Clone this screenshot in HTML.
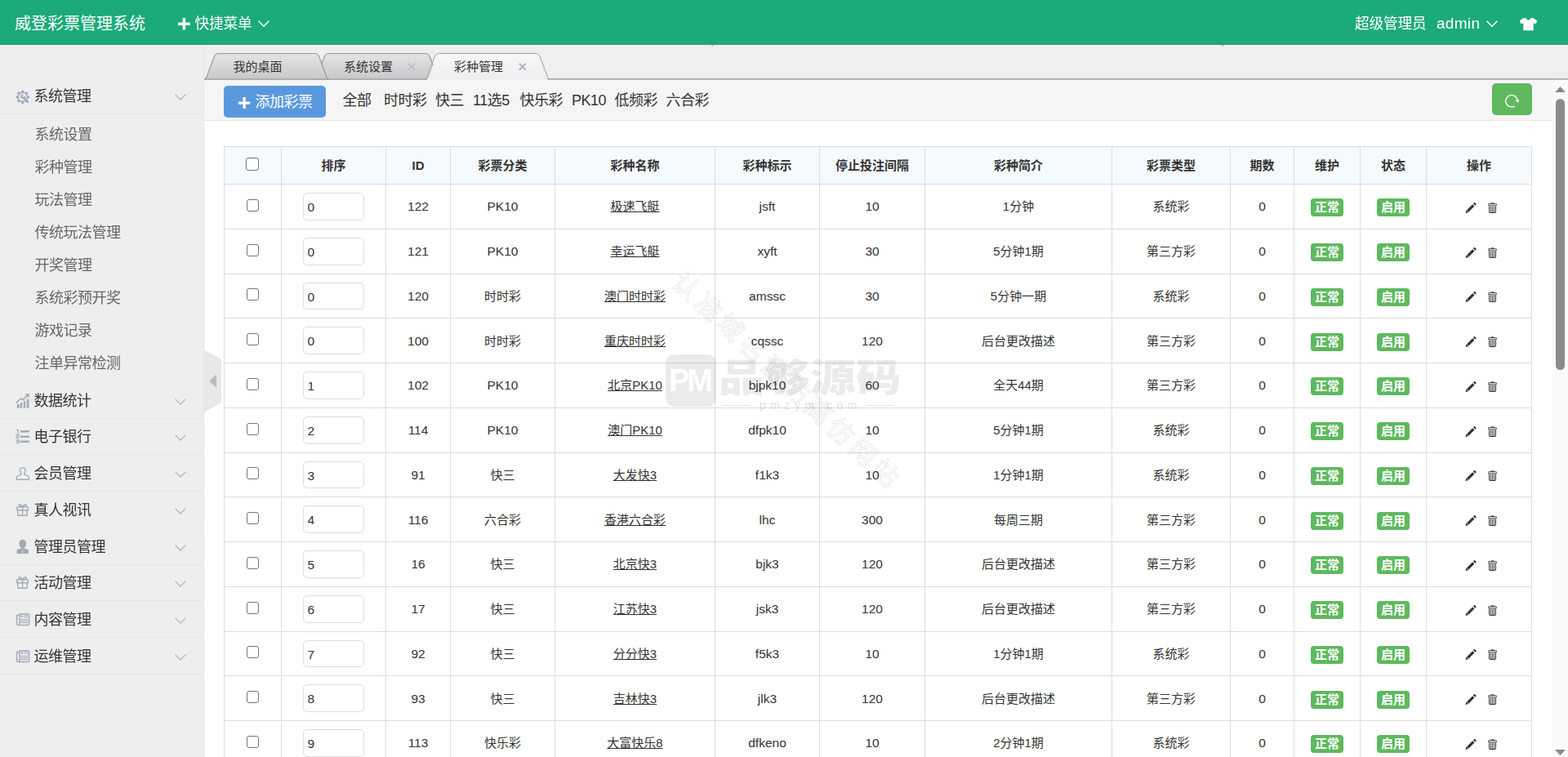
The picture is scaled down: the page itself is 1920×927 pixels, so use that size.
<!DOCTYPE html>
<html lang="zh-CN">
<head>
<meta charset="utf-8">
<title>威登彩票管理系统</title>
<style>
*{box-sizing:border-box}
html,body{margin:0;padding:0}
body{width:1920px;height:927px;overflow:hidden;position:relative;background:#fff;color:#333;
  font-family:"Liberation Sans","Noto Sans CJK SC",sans-serif;font-size:17.5px}
a{color:inherit;text-decoration:none}
svg{display:block}
/* header */
#hd{position:absolute;left:0;top:0;width:1920px;height:55px;background:#1caa7b;color:#fff;border-bottom:1px solid #12a676;z-index:3}
#hl{position:absolute;left:0;top:55px;width:1920px;height:1px;background:rgba(255,248,252,.55);z-index:9}
#hl i{position:absolute;top:0;width:3px;height:2px;background:rgba(120,115,120,.38);border-radius:0 0 2px 2px}
#hd .logo{position:absolute;left:18px;top:2px;line-height:55px;font-size:20px;white-space:nowrap}
#hd .qm{position:absolute;left:0;top:0;height:55px}
#hd .qm .qt{position:absolute;left:238.6px;top:1.700px;line-height:55px;white-space:nowrap;font-size:17.700px;letter-spacing:-.2px}
#hd .ub .role{position:absolute;left:1659px;top:1.500px;line-height:55px;white-space:nowrap;font-size:17.700px;letter-spacing:-.2px}
#hd .ub .adm{position:absolute;left:1759px;top:.5px;line-height:55px;white-space:nowrap;font-size:19px;letter-spacing:.3px}
#hd svg{position:absolute}
/* aside */
#aside{position:absolute;left:0;top:55px;width:250px;height:872px;background:rgba(238,238,238,.98);border-right:1px solid #e5e5e5;will-change:transform;font-size:18px;letter-spacing:-.5px}
#aside .menu{position:relative}
#aside dl{position:absolute;left:0;width:249px}
#aside dl,#aside dd,#aside ul,#aside li{margin:0;padding:0;list-style:none}
#aside dt{position:relative;height:45px;line-height:46px;padding-left:41.5px;border-bottom:1px solid #e5e5e5;color:#333;white-space:nowrap}
#aside dt svg{position:absolute}
#aside dd ul{padding:4px 10px}
#aside dd li{height:40px;line-height:42px}
#aside dd li a{display:block;padding-left:32.5px;color:#666;white-space:nowrap}
#handle{position:absolute;left:250px;top:429px;width:22px;height:76px;z-index:5}
/* tabs */
#tabbar{position:absolute;left:250px;top:55px;width:1670px;height:43px;background:#efeff1;font-size:15px;color:#333}
#tabbar svg{position:absolute;left:0;top:0}
#tabbar .tab{position:absolute;top:11px;height:32px;line-height:32px;white-space:nowrap}
#tabbar .t1{left:35.5px}
#tabbar .t2{left:171px}
#tabbar .t3{left:306px}
/* toolbar */
#toolbar{position:absolute;left:250px;top:98px;width:1651px;height:50px;background:#f5f5f5;border-bottom:1px solid #e5e5e5}
#toolbar .btn-add{position:absolute;left:24px;top:7px;width:125px;height:39px;background:#5a98de;border-radius:5px;color:#fff}
#toolbar .btn-add span{position:absolute;left:38.5px;top:1px;line-height:39px;white-space:nowrap;font-size:18px;letter-spacing:-.5px}
#toolbar .btn-add svg{position:absolute}
#toolbar .links a{position:absolute;top:1px;line-height:49px;white-space:nowrap;color:#333;font-size:18px;letter-spacing:-.5px}
#toolbar .l0{left:169.5px}
#toolbar .l1{left:220px}
#toolbar .l2{left:283px}
#toolbar .l3{left:329px}
#toolbar .l4{left:386.5px}
#toolbar .l5{left:450px}
#toolbar .l6{left:502.5px}
#toolbar .l7{left:565.5px}
#toolbar .btn-ref{position:absolute;left:1577px;top:4px;width:49px;height:39px;background:#5eb95e;border-radius:5px}
#toolbar .btn-ref svg{position:absolute}
/* table */
#main{position:absolute;left:250px;top:148px;width:1651px;height:779px;background:#fff;overflow:hidden}
#tb{position:absolute;left:24px;top:31px;width:1602px;table-layout:fixed;border-collapse:separate;border-spacing:0;
  border-top:1px solid #ddd;border-right:1px solid #ddd;font-size:15px;color:#333}
#tb th,#tb td{border-left:1px solid #ddd;border-bottom:1px solid #ddd;text-align:center;vertical-align:middle;padding:0;white-space:nowrap;line-height:25px}
#tb th{height:46px;background:#f5fafe;font-weight:bold}
#tb td{height:54.75px}
#tb u{text-decoration:underline}
#tb td.n{font-size:15.5px}
.ck{-webkit-appearance:none;appearance:none;display:inline-block;width:15px;height:15px;margin:0 1px 0 0;position:relative;top:-3px;border:1.2px solid #767676;border-radius:3px;background:#fff;vertical-align:middle}
.it{width:75px;height:33.75px;border:1px solid #ddd;border-radius:5px;padding:2.5px 4.5px 0;margin:0;font:inherit;font-size:15.5px;color:#333;background:#fff;outline:none;vertical-align:middle}
.lb{display:inline-block;height:22px;line-height:22px;padding:0 5px;background:#5eb95e;color:#fff;font-weight:bold;border-radius:4px;vertical-align:middle}
.op{padding-left:4px !important}
.op svg{display:inline-block;vertical-align:middle}
#tb th .ck{width:16px;height:16px;top:-3.5px;margin-right:2px}
/* watermark */
#wm{position:absolute;left:0;top:0;width:1920px;height:927px;pointer-events:none;z-index:8;overflow:hidden}
#wm .pm{position:absolute;left:815px;top:434px;width:62px;height:64px;border-radius:11px;background:rgba(0,0,0,.08);color:#fff;
  font-family:"Liberation Sans",sans-serif;font-weight:bold;font-size:38px;line-height:64px;text-align:center;letter-spacing:-3px;text-indent:-3px}
#wm .pg{position:absolute;left:880px;top:433px;height:60px;line-height:60px;font-size:47px;font-weight:900;color:rgba(0,0,0,.078);white-space:nowrap;letter-spacing:0;transform:scaleX(1.19);transform-origin:0 50%}
#wm .wm-url{position:absolute;left:885px;top:486px;width:209px;height:20px;line-height:20px;text-align:center;font-size:14px;color:rgba(0,0,0,.12);letter-spacing:5.5px;white-space:nowrap}
#wm .wm-url span{position:relative;left:3px}
#wm .wm-url i{position:absolute;top:9.5px;width:33px;height:1px;background:rgba(0,0,0,.1)}
#wm .wm-url i.a{left:0}
#wm .wm-url i.b{right:0}
#wm .wm-diag{position:absolute;left:778px;top:447px;width:371px;height:40px;line-height:40px;font-size:32px;letter-spacing:5.1px;white-space:nowrap;text-align:center;
  color:transparent;-webkit-text-stroke:1px rgba(0,0,0,.09);transform:rotate(43.2deg);transform-origin:50% 50%}
/* scrollbar */
#sb{position:absolute;left:1901px;top:98px;width:19px;height:829px;background:#fafafb}

</style>
</head>
<body>
<header id="hd">
  <a class="logo">威登彩票管理系统</a>
  <div class="qm"><svg style="left:218px;top:22px" width="15" height="15" viewBox="0 0 15 15"><path d="M5.7 0h3.4v5.6h5.6v3.4H9.1v5.6H5.7V9H0V5.6h5.7z" fill="#fff"/></svg><span class="qt">快捷菜单</span><svg style="left:316px;top:25px" width="14" height="9" viewBox="0 0 14 9"><path d="M0.6 0.8L7 7.3L13.4 0.8" fill="none" stroke="#fff" stroke-width="1.5"/></svg></div>
  <div class="ub"><span class="role">超级管理员</span><span class="adm">admin</span><svg style="left:1820px;top:25px" width="14" height="9" viewBox="0 0 14 9"><path d="M0.6 0.8L7 7.3L13.4 0.8" fill="none" stroke="#fff" stroke-width="1.5"/></svg><svg style="left:1861px;top:22px" width="21" height="15.500" viewBox="0 0 21 15.500"><path d="M7.300 0C7.900 1.900 9 2.800 10.500 2.800S13.100 1.900 13.700 0L16.600 0.400L21 3.500L19.400 7L16.400 6V15.100H4.700V6L1.700 7L0 3.500L4.400 0.400z" fill="#fff" stroke="#fff" stroke-width="0.600" stroke-linejoin="round"/></svg></div>
</header>
<div id="hl"><i style="left:870.5px"></i><i style="left:1495.5px"></i></div>
<aside id="aside"><div class="menu">
<dl style="top:40px"><dt><svg style="left:17px;top:11px" width="22" height="24" viewBox="0 0 22 24" fill="#a3abb9" stroke="none"><path d="M9.11 6.91L9.21 4.74L12.19 4.74L12.29 6.91L13.81 7.54L15.42 6.07L17.53 8.18L16.06 9.79L16.69 11.31L18.86 11.41L18.86 14.39L16.69 14.49L16.06 16.01L17.53 17.62L15.42 19.73L13.81 18.26L12.29 18.89L12.19 21.06L9.21 21.06L9.11 18.89L7.59 18.26L5.98 19.73L3.87 17.62L5.34 16.01L4.71 14.49L2.54 14.39L2.54 11.41L4.71 11.31L5.34 9.79L3.87 8.18L5.98 6.07L7.59 7.54z M10.700 8.100a4.800 4.800 0 100 9.600 4.800 4.800 0 000-9.600z" fill-rule="evenodd"/><path d="M7.900 12.500a3 3 0 014.200-2.900l-1.900 1.900 1.500 1.500 1.900-1.900a3 3 0 01-3.300 4.200z"/><path d="M10.900 14.300l1.700-1.700 5.200 5.200a1.200 1.200 0 01-1.700 1.700z"/></svg><span class="t">系统管理</span><svg style="left:214px;top:19.800px" width="14" height="8" viewBox="0 0 14 8"><path d="M0.600 0.600L7 7L13.400 0.600" fill="none" stroke="#b4b4b4" stroke-width="1.3"/></svg></dt><dd><ul><li><a>系统设置</a></li><li><a>彩种管理</a></li><li><a>玩法管理</a></li><li><a>传统玩法管理</a></li><li><a>开奖管理</a></li><li><a>系统彩预开奖</a></li><li><a>游戏记录</a></li><li><a>注单异常检测</a></li></ul></dd></dl>
<dl style="top:413px"><dt><svg style="left:17px;top:11px" width="22" height="24" viewBox="0 0 22 24" fill="#a3abb9" stroke="none"><path d="M3.800 16h3v4.800h-3zM7.900 13.900h2.200v6.900H7.900zM11.800 12.100h2.300v8.700h-2.300zM15.700 9.800h2.800v11h-2.800z"/><path d="M3.200 14.200L8.700 8.800 11.100 10.700 16.600 5.400" fill="none" stroke="#a3abb9" stroke-width="1.600" stroke-linecap="round" stroke-linejoin="round"/><path d="M13.400 3.400L19 3L18.400 8.400z"/></svg><span class="t">数据统计</span><svg style="left:214px;top:19.800px" width="14" height="8" viewBox="0 0 14 8"><path d="M0.600 0.600L7 7L13.400 0.600" fill="none" stroke="#b4b4b4" stroke-width="1.3"/></svg></dt></dl>
<dl style="top:457px"><dt><svg style="left:17px;top:11px" width="22" height="24" viewBox="0 0 22 24" fill="#a3abb9" stroke="none"><path d="M7.900 4.100h11.200v2.400H7.900zM7.900 10.600h11.200v2.400H7.900zM7.900 16.600h11.200v2.400H7.900z"/><path d="M2.500 3h3.200v3.900H4.200V4.100H2.500zM2.400 8.200h4.300v3.300H3.800v1.100h2.900v1.200H2.400v-3.400h2.900v-1H2.400zM2.400 15.300h4.300V20H2.400v-1.100h2.900v-.700H3.300v-1.100h2v-.700H2.400z"/></svg><span class="t">电子银行</span><svg style="left:214px;top:19.800px" width="14" height="8" viewBox="0 0 14 8"><path d="M0.600 0.600L7 7L13.400 0.600" fill="none" stroke="#b4b4b4" stroke-width="1.3"/></svg></dt></dl>
<dl style="top:502px"><dt><svg style="left:17px;top:11px" width="22" height="24" viewBox="0 0 22 24" fill="#a3abb9" stroke="none"><path d="M10.800 4.600c2.200 0 3.300 1.600 3.300 3.600 0 1.400-.600 2.400-1.200 3.200-.500.700-.400 1.400.400 1.700 2.400.900 5 1.600 5.100 4.200v1.900H3.200v-1.900c.100-2.600 2.700-3.300 5.100-4.200.800-.300.900-1 .400-1.700-.600-.800-1.200-1.800-1.200-3.200 0-2 1.100-3.600 3.300-3.600z" fill="none" stroke="#a3abb9" stroke-width="1.400" stroke-linejoin="round"/></svg><span class="t">会员管理</span><svg style="left:214px;top:19.800px" width="14" height="8" viewBox="0 0 14 8"><path d="M0.600 0.600L7 7L13.400 0.600" fill="none" stroke="#b4b4b4" stroke-width="1.3"/></svg></dt></dl>
<dl style="top:547px"><dt><svg style="left:17px;top:11px" width="22" height="24" viewBox="0 0 22 24" fill="#a3abb9" stroke="none"><path d="M3.800 7.900h13.500v3.900H3.800zM4.900 11.800h11.300v6.500H4.900zM10.600 7.900v10.400" fill="none" stroke="#a3abb9" stroke-width="1.400" stroke-linejoin="round"/><path d="M10.400 7.500C8.800 4.600 6.400 4 5.900 5.400 5.500 6.700 7.200 7.500 10.400 7.500zM10.800 7.500C12.400 4.600 14.800 4 15.300 5.400 15.700 6.700 14 7.500 10.800 7.500z" fill="none" stroke="#a3abb9" stroke-width="1.300" stroke-linejoin="round"/></svg><span class="t">真人视讯</span><svg style="left:214px;top:19.800px" width="14" height="8" viewBox="0 0 14 8"><path d="M0.600 0.600L7 7L13.400 0.600" fill="none" stroke="#b4b4b4" stroke-width="1.3"/></svg></dt></dl>
<dl style="top:592px"><dt><svg style="left:17px;top:11px" width="22" height="24" viewBox="0 0 22 24" fill="#a3abb9" stroke="none"><path d="M10.700 2.800c2.700 0 4.500 2.100 4.500 4.900 0 2.200-1.200 3.900-2.600 4.700v1l4.200 1.300c.900.300 1.300 1 1.300 1.900V19c0 .600-.500 1-1.100 1H4.600c-.600 0-1.100-.400-1.100-1v-2.400c0-.900.400-1.600 1.300-1.900L9 13.400v-1C7.600 11.600 6.300 9.900 6.300 7.700c0-2.800 1.800-4.900 4.400-4.900z"/><path d="M10.200 15.300h1.100v1h-1.100zM10.100 16.900h1.300l.200 1.900h-1.700z" fill="#dfe2e6"/></svg><span class="t">管理员管理</span><svg style="left:214px;top:19.800px" width="14" height="8" viewBox="0 0 14 8"><path d="M0.600 0.600L7 7L13.400 0.600" fill="none" stroke="#b4b4b4" stroke-width="1.3"/></svg></dt></dl>
<dl style="top:636px"><dt><svg style="left:17px;top:11px" width="22" height="24" viewBox="0 0 22 24" fill="#a3abb9" stroke="none"><path d="M3.800 7.900h13.500v3.900H3.800zM4.900 11.800h11.300v6.500H4.900zM10.600 7.900v10.400" fill="none" stroke="#a3abb9" stroke-width="1.400" stroke-linejoin="round"/><path d="M10.400 7.500C8.800 4.600 6.400 4 5.900 5.400 5.500 6.700 7.200 7.500 10.400 7.500zM10.800 7.500C12.400 4.600 14.800 4 15.300 5.400 15.700 6.700 14 7.500 10.800 7.500z" fill="none" stroke="#a3abb9" stroke-width="1.300" stroke-linejoin="round"/></svg><span class="t">活动管理</span><svg style="left:214px;top:19.800px" width="14" height="8" viewBox="0 0 14 8"><path d="M0.600 0.600L7 7L13.400 0.600" fill="none" stroke="#b4b4b4" stroke-width="1.3"/></svg></dt></dl>
<dl style="top:681px"><dt><svg style="left:17px;top:11px" width="22" height="24" viewBox="0 0 22 24" fill="#a3abb9" stroke="none"><path d="M7 4.700h10.300q1.200 0 1.200 1.200V17q0 1.400-1.400 1.400H5q-1.400 0-1.400-1.400V6.600H7z M7 6.600V17q0 1.400-1.700 1.400" fill="none" stroke="#a3abb9" stroke-width="1.500" stroke-linejoin="round"/><path d="M9 6.200h2.100V9H9zM12.600 6h4.300v.900h-4.300zM12.600 8.100h4.300V9h-4.300zM8.200 11.100h8.700v1h-8.700zM8.200 13h8.700v1h-8.700zM8.200 14.900h8.700v1h-8.700z"/></svg><span class="t">内容管理</span><svg style="left:214px;top:19.800px" width="14" height="8" viewBox="0 0 14 8"><path d="M0.600 0.600L7 7L13.400 0.600" fill="none" stroke="#b4b4b4" stroke-width="1.3"/></svg></dt></dl>
<dl style="top:726px"><dt><svg style="left:17px;top:11px" width="22" height="24" viewBox="0 0 22 24" fill="#a3abb9" stroke="none"><path d="M7 4.700h10.300q1.200 0 1.200 1.200V17q0 1.400-1.400 1.400H5q-1.400 0-1.400-1.400V6.600H7z M7 6.600V17q0 1.400-1.700 1.400" fill="none" stroke="#a3abb9" stroke-width="1.500" stroke-linejoin="round"/><path d="M9 6.200h2.100V9H9zM12.600 6h4.300v.900h-4.300zM12.600 8.100h4.300V9h-4.300zM8.200 11.100h8.700v1h-8.700zM8.200 13h8.700v1h-8.700zM8.200 14.900h8.700v1h-8.700z"/></svg><span class="t">运维管理</span><svg style="left:214px;top:19.800px" width="14" height="8" viewBox="0 0 14 8"><path d="M0.600 0.600L7 7L13.400 0.600" fill="none" stroke="#b4b4b4" stroke-width="1.3"/></svg></dt></dl>
</div></aside>
<div id="handle"><svg width="22" height="76" viewBox="0 0 22 76"><path d="M0 0L21 10.700V64L0 76z" fill="#e8e8e8"/><path d="M15 29.600V46L6 37.800z" fill="#bdbdbd"/></svg></div>
<div id="tabbar">
<svg width="1670" height="43" viewBox="0 0 1670 43"><defs><linearGradient id="g1" x1="0" y1="0" x2="0" y2="1"><stop offset="0" stop-color="#e4e4e4"/><stop offset="1" stop-color="#c8c8ca"/></linearGradient><linearGradient id="g2" x1="0" y1="0" x2="0" y2="1"><stop offset="0" stop-color="#f7f7f7"/><stop offset="1" stop-color="#eeeef0"/></linearGradient></defs><rect x="0" y="41" width="1670" height="1" fill="#a6a6a6"/><rect x="0" y="42" width="1670" height="1" fill="#c4c4c4"/><path d="M135 42C136.5 42 137.5 41 138.5 38L147 15Q148.7 10.500 152.5 10.500H271.0Q274.8 10.500 276.5 15L285.0 38C286.0 41 287.0 42 288.5 42z" fill="url(#g1)" stroke="#9a9a9a" stroke-width="1.200"/><path d="M0 42C1.5 42 2.5 41 3.5 38L12 15Q13.7 10.500 17.5 10.500H135.5Q139.3 10.500 141 15L149.5 38C150.5 41 151.5 42 153 42z" fill="url(#g1)" stroke="#9a9a9a" stroke-width="1.200"/><path d="M272 42C273.5 42 274.5 41 275.5 38L284 15Q285.7 10.500 289.5 10.500H404.0Q407.8 10.500 409.5 15L418.0 38C419.0 41 420.0 42 421.5 42zV43H272z" fill="url(#g2)"/><path d="M270 42C271.5 42 272.5 41 273.5 38L282 15Q283.7 10.500 287.5 10.500H406.0Q409.8 10.500 411.5 15L420.0 38C421.0 41 422.0 42 423.5 42" fill="none" stroke="#a3a3a3"/><rect x="273" y="42" width="148" height="1" fill="#f2f2f3"/></svg>
  <span class="tab t1">我的桌面</span>
  <span class="tab t2">系统设置</span><svg style="left:249.3px;top:22.300px" width="9.500" height="9.500" viewBox="0 0 9 9"><path d="M0.800 0.800L8.200 8.200M8.200 0.800L0.800 8.200" stroke="#b1b8c1" stroke-width="1.4" fill="none"/></svg>
  <span class="tab t3">彩种管理</span><svg style="left:384.5px;top:22.300px" width="9.500" height="9.500" viewBox="0 0 9 9"><path d="M0.800 0.800L8.200 8.200M8.200 0.800L0.800 8.200" stroke="#a4abb6" stroke-width="1.6" fill="none"/></svg>
</div>
<nav id="toolbar">
  <a class="btn-add"><svg style="left:18px;top:13.600px" width="14.500" height="14.500" viewBox="0 0 15 15"><path d="M5.700 0h3.400v5.600h5.600v3.400H9.100v5.600H5.700V9H0V5.600h5.700z" fill="#fff"/></svg><span>添加彩票</span></a>
  <span class="links"><a class="l0">全部</a><a class="l1">时时彩</a><a class="l2">快三</a><a class="l3">11选5</a><a class="l4">快乐彩</a><a class="l5">PK10</a><a class="l6">低频彩</a><a class="l7">六合彩</a></span>
  <a class="btn-ref"><svg style="left:16px;top:13px" width="18" height="18" viewBox="0 0 18 18"><path d="M15.100 8.200A7.200 7.200 0 1 0 11.700 14.800" fill="none" stroke="#fff" stroke-width="1.400"/><path d="M12.400 7.700L17.300 6.700L15.700 10.900z" fill="#fff"/></svg></a>
</nav>
<main id="main">
<table id="tb">
<colgroup><col style="width:70px"><col style="width:128px"><col style="width:79px"><col style="width:128px"><col style="width:196px"><col style="width:128px"><col style="width:129px"><col style="width:229px"><col style="width:145px"><col style="width:78px"><col style="width:81px"><col style="width:81px"><col style="width:129px"></colgroup>
<thead><tr><th><input type="checkbox" class="ck"></th><th>排序</th><th>ID</th><th>彩票分类</th><th>彩种名称</th><th>彩种标示</th><th>停止投注间隔</th><th>彩种简介</th><th>彩票类型</th><th>期数</th><th>维护</th><th>状态</th><th>操作</th></tr></thead>
<tbody>
<tr><td><input type="checkbox" class="ck"></td><td><input type="text" class="it" value="0"></td><td class="n">122</td><td class="n">PK10</td><td><u>极速飞艇</u></td><td class="n">jsft</td><td class="n">10</td><td>1分钟</td><td>系统彩</td><td class="n">0</td><td><span class="lb">正常</span></td><td><span class="lb">启用</span></td><td class="op"><svg width="15" height="15" viewBox="0 0 15 15" style="margin-right:13px"><path d="M0.600 14L1.500 10.300L4.300 13.100z" fill="#333"/><path d="M3.300 11.300L10.300 4.300M11.100 3.500L12.700 1.900" fill="none" stroke="#333" stroke-width="3.300"/></svg><svg width="11" height="13" viewBox="0 0 11 13"><path d="M3.300 1.500Q3.300 0.200 5.500 0.200T7.700 1.500z" fill="#333"/><rect x="0.500" y="1.700" width="10" height="2.200" rx="0.700" fill="#fff" stroke="#333" stroke-width="1"/><path d="M1.600 4.400V11.300Q1.600 12.400 2.700 12.400H8.300Q9.400 12.400 9.400 11.300V4.400" fill="none" stroke="#333" stroke-width="1.100"/><path d="M3.600 5V11.600M5.500 5V11.600M7.400 5V11.600" fill="none" stroke="#333" stroke-width="0.900"/></svg></td></tr>
<tr><td><input type="checkbox" class="ck"></td><td><input type="text" class="it" value="0"></td><td class="n">121</td><td class="n">PK10</td><td><u>幸运飞艇</u></td><td class="n">xyft</td><td class="n">30</td><td>5分钟1期</td><td>第三方彩</td><td class="n">0</td><td><span class="lb">正常</span></td><td><span class="lb">启用</span></td><td class="op"><svg width="15" height="15" viewBox="0 0 15 15" style="margin-right:13px"><path d="M0.600 14L1.500 10.300L4.300 13.100z" fill="#333"/><path d="M3.300 11.300L10.300 4.300M11.100 3.500L12.700 1.900" fill="none" stroke="#333" stroke-width="3.300"/></svg><svg width="11" height="13" viewBox="0 0 11 13"><path d="M3.300 1.500Q3.300 0.200 5.500 0.200T7.700 1.500z" fill="#333"/><rect x="0.500" y="1.700" width="10" height="2.200" rx="0.700" fill="#fff" stroke="#333" stroke-width="1"/><path d="M1.600 4.400V11.300Q1.600 12.400 2.700 12.400H8.300Q9.400 12.400 9.400 11.300V4.400" fill="none" stroke="#333" stroke-width="1.100"/><path d="M3.600 5V11.600M5.500 5V11.600M7.400 5V11.600" fill="none" stroke="#333" stroke-width="0.900"/></svg></td></tr>
<tr><td><input type="checkbox" class="ck"></td><td><input type="text" class="it" value="0"></td><td class="n">120</td><td>时时彩</td><td><u>澳门时时彩</u></td><td class="n">amssc</td><td class="n">30</td><td>5分钟一期</td><td>系统彩</td><td class="n">0</td><td><span class="lb">正常</span></td><td><span class="lb">启用</span></td><td class="op"><svg width="15" height="15" viewBox="0 0 15 15" style="margin-right:13px"><path d="M0.600 14L1.500 10.300L4.300 13.100z" fill="#333"/><path d="M3.300 11.300L10.300 4.300M11.100 3.500L12.700 1.900" fill="none" stroke="#333" stroke-width="3.300"/></svg><svg width="11" height="13" viewBox="0 0 11 13"><path d="M3.300 1.500Q3.300 0.200 5.500 0.200T7.700 1.500z" fill="#333"/><rect x="0.500" y="1.700" width="10" height="2.200" rx="0.700" fill="#fff" stroke="#333" stroke-width="1"/><path d="M1.600 4.400V11.300Q1.600 12.400 2.700 12.400H8.300Q9.400 12.400 9.400 11.300V4.400" fill="none" stroke="#333" stroke-width="1.100"/><path d="M3.600 5V11.600M5.500 5V11.600M7.400 5V11.600" fill="none" stroke="#333" stroke-width="0.900"/></svg></td></tr>
<tr><td><input type="checkbox" class="ck"></td><td><input type="text" class="it" value="0"></td><td class="n">100</td><td>时时彩</td><td><u>重庆时时彩</u></td><td class="n">cqssc</td><td class="n">120</td><td>后台更改描述</td><td>第三方彩</td><td class="n">0</td><td><span class="lb">正常</span></td><td><span class="lb">启用</span></td><td class="op"><svg width="15" height="15" viewBox="0 0 15 15" style="margin-right:13px"><path d="M0.600 14L1.500 10.300L4.300 13.100z" fill="#333"/><path d="M3.300 11.300L10.300 4.300M11.100 3.500L12.700 1.900" fill="none" stroke="#333" stroke-width="3.300"/></svg><svg width="11" height="13" viewBox="0 0 11 13"><path d="M3.300 1.500Q3.300 0.200 5.500 0.200T7.700 1.500z" fill="#333"/><rect x="0.500" y="1.700" width="10" height="2.200" rx="0.700" fill="#fff" stroke="#333" stroke-width="1"/><path d="M1.600 4.400V11.300Q1.600 12.400 2.700 12.400H8.300Q9.400 12.400 9.400 11.300V4.400" fill="none" stroke="#333" stroke-width="1.100"/><path d="M3.600 5V11.600M5.500 5V11.600M7.400 5V11.600" fill="none" stroke="#333" stroke-width="0.900"/></svg></td></tr>
<tr><td><input type="checkbox" class="ck"></td><td><input type="text" class="it" value="1"></td><td class="n">102</td><td class="n">PK10</td><td><u>北京PK10</u></td><td class="n">bjpk10</td><td class="n">60</td><td>全天44期</td><td>第三方彩</td><td class="n">0</td><td><span class="lb">正常</span></td><td><span class="lb">启用</span></td><td class="op"><svg width="15" height="15" viewBox="0 0 15 15" style="margin-right:13px"><path d="M0.600 14L1.500 10.300L4.300 13.100z" fill="#333"/><path d="M3.300 11.300L10.300 4.300M11.100 3.500L12.700 1.900" fill="none" stroke="#333" stroke-width="3.300"/></svg><svg width="11" height="13" viewBox="0 0 11 13"><path d="M3.300 1.500Q3.300 0.200 5.500 0.200T7.700 1.500z" fill="#333"/><rect x="0.500" y="1.700" width="10" height="2.200" rx="0.700" fill="#fff" stroke="#333" stroke-width="1"/><path d="M1.600 4.400V11.300Q1.600 12.400 2.700 12.400H8.300Q9.400 12.400 9.400 11.300V4.400" fill="none" stroke="#333" stroke-width="1.100"/><path d="M3.600 5V11.600M5.500 5V11.600M7.400 5V11.600" fill="none" stroke="#333" stroke-width="0.900"/></svg></td></tr>
<tr><td><input type="checkbox" class="ck"></td><td><input type="text" class="it" value="2"></td><td class="n">114</td><td class="n">PK10</td><td><u>澳门PK10</u></td><td class="n">dfpk10</td><td class="n">10</td><td>5分钟1期</td><td>系统彩</td><td class="n">0</td><td><span class="lb">正常</span></td><td><span class="lb">启用</span></td><td class="op"><svg width="15" height="15" viewBox="0 0 15 15" style="margin-right:13px"><path d="M0.600 14L1.500 10.300L4.300 13.100z" fill="#333"/><path d="M3.300 11.300L10.300 4.300M11.100 3.500L12.700 1.900" fill="none" stroke="#333" stroke-width="3.300"/></svg><svg width="11" height="13" viewBox="0 0 11 13"><path d="M3.300 1.500Q3.300 0.200 5.500 0.200T7.700 1.500z" fill="#333"/><rect x="0.500" y="1.700" width="10" height="2.200" rx="0.700" fill="#fff" stroke="#333" stroke-width="1"/><path d="M1.600 4.400V11.300Q1.600 12.400 2.700 12.400H8.300Q9.400 12.400 9.400 11.300V4.400" fill="none" stroke="#333" stroke-width="1.100"/><path d="M3.600 5V11.600M5.500 5V11.600M7.400 5V11.600" fill="none" stroke="#333" stroke-width="0.900"/></svg></td></tr>
<tr><td><input type="checkbox" class="ck"></td><td><input type="text" class="it" value="3"></td><td class="n">91</td><td>快三</td><td><u>大发快3</u></td><td class="n">f1k3</td><td class="n">10</td><td>1分钟1期</td><td>系统彩</td><td class="n">0</td><td><span class="lb">正常</span></td><td><span class="lb">启用</span></td><td class="op"><svg width="15" height="15" viewBox="0 0 15 15" style="margin-right:13px"><path d="M0.600 14L1.500 10.300L4.300 13.100z" fill="#333"/><path d="M3.300 11.300L10.300 4.300M11.100 3.500L12.700 1.900" fill="none" stroke="#333" stroke-width="3.300"/></svg><svg width="11" height="13" viewBox="0 0 11 13"><path d="M3.300 1.500Q3.300 0.200 5.500 0.200T7.700 1.500z" fill="#333"/><rect x="0.500" y="1.700" width="10" height="2.200" rx="0.700" fill="#fff" stroke="#333" stroke-width="1"/><path d="M1.600 4.400V11.300Q1.600 12.400 2.700 12.400H8.300Q9.400 12.400 9.400 11.300V4.400" fill="none" stroke="#333" stroke-width="1.100"/><path d="M3.600 5V11.600M5.500 5V11.600M7.400 5V11.600" fill="none" stroke="#333" stroke-width="0.900"/></svg></td></tr>
<tr><td><input type="checkbox" class="ck"></td><td><input type="text" class="it" value="4"></td><td class="n">116</td><td>六合彩</td><td><u>香港六合彩</u></td><td class="n">lhc</td><td class="n">300</td><td>每周三期</td><td>第三方彩</td><td class="n">0</td><td><span class="lb">正常</span></td><td><span class="lb">启用</span></td><td class="op"><svg width="15" height="15" viewBox="0 0 15 15" style="margin-right:13px"><path d="M0.600 14L1.500 10.300L4.300 13.100z" fill="#333"/><path d="M3.300 11.300L10.300 4.300M11.100 3.500L12.700 1.900" fill="none" stroke="#333" stroke-width="3.300"/></svg><svg width="11" height="13" viewBox="0 0 11 13"><path d="M3.300 1.500Q3.300 0.200 5.500 0.200T7.700 1.500z" fill="#333"/><rect x="0.500" y="1.700" width="10" height="2.200" rx="0.700" fill="#fff" stroke="#333" stroke-width="1"/><path d="M1.600 4.400V11.300Q1.600 12.400 2.700 12.400H8.300Q9.400 12.400 9.400 11.300V4.400" fill="none" stroke="#333" stroke-width="1.100"/><path d="M3.600 5V11.600M5.500 5V11.600M7.400 5V11.600" fill="none" stroke="#333" stroke-width="0.900"/></svg></td></tr>
<tr><td><input type="checkbox" class="ck"></td><td><input type="text" class="it" value="5"></td><td class="n">16</td><td>快三</td><td><u>北京快3</u></td><td class="n">bjk3</td><td class="n">120</td><td>后台更改描述</td><td>第三方彩</td><td class="n">0</td><td><span class="lb">正常</span></td><td><span class="lb">启用</span></td><td class="op"><svg width="15" height="15" viewBox="0 0 15 15" style="margin-right:13px"><path d="M0.600 14L1.500 10.300L4.300 13.100z" fill="#333"/><path d="M3.300 11.300L10.300 4.300M11.100 3.500L12.700 1.900" fill="none" stroke="#333" stroke-width="3.300"/></svg><svg width="11" height="13" viewBox="0 0 11 13"><path d="M3.300 1.500Q3.300 0.200 5.500 0.200T7.700 1.500z" fill="#333"/><rect x="0.500" y="1.700" width="10" height="2.200" rx="0.700" fill="#fff" stroke="#333" stroke-width="1"/><path d="M1.600 4.400V11.300Q1.600 12.400 2.700 12.400H8.300Q9.400 12.400 9.400 11.300V4.400" fill="none" stroke="#333" stroke-width="1.100"/><path d="M3.600 5V11.600M5.500 5V11.600M7.400 5V11.600" fill="none" stroke="#333" stroke-width="0.900"/></svg></td></tr>
<tr><td><input type="checkbox" class="ck"></td><td><input type="text" class="it" value="6"></td><td class="n">17</td><td>快三</td><td><u>江苏快3</u></td><td class="n">jsk3</td><td class="n">120</td><td>后台更改描述</td><td>第三方彩</td><td class="n">0</td><td><span class="lb">正常</span></td><td><span class="lb">启用</span></td><td class="op"><svg width="15" height="15" viewBox="0 0 15 15" style="margin-right:13px"><path d="M0.600 14L1.500 10.300L4.300 13.100z" fill="#333"/><path d="M3.300 11.300L10.300 4.300M11.100 3.500L12.700 1.900" fill="none" stroke="#333" stroke-width="3.300"/></svg><svg width="11" height="13" viewBox="0 0 11 13"><path d="M3.300 1.500Q3.300 0.200 5.500 0.200T7.700 1.500z" fill="#333"/><rect x="0.500" y="1.700" width="10" height="2.200" rx="0.700" fill="#fff" stroke="#333" stroke-width="1"/><path d="M1.600 4.400V11.300Q1.600 12.400 2.700 12.400H8.300Q9.400 12.400 9.400 11.300V4.400" fill="none" stroke="#333" stroke-width="1.100"/><path d="M3.600 5V11.600M5.500 5V11.600M7.400 5V11.600" fill="none" stroke="#333" stroke-width="0.900"/></svg></td></tr>
<tr><td><input type="checkbox" class="ck"></td><td><input type="text" class="it" value="7"></td><td class="n">92</td><td>快三</td><td><u>分分快3</u></td><td class="n">f5k3</td><td class="n">10</td><td>1分钟1期</td><td>系统彩</td><td class="n">0</td><td><span class="lb">正常</span></td><td><span class="lb">启用</span></td><td class="op"><svg width="15" height="15" viewBox="0 0 15 15" style="margin-right:13px"><path d="M0.600 14L1.500 10.300L4.300 13.100z" fill="#333"/><path d="M3.300 11.300L10.300 4.300M11.100 3.500L12.700 1.900" fill="none" stroke="#333" stroke-width="3.300"/></svg><svg width="11" height="13" viewBox="0 0 11 13"><path d="M3.300 1.500Q3.300 0.200 5.500 0.200T7.700 1.500z" fill="#333"/><rect x="0.500" y="1.700" width="10" height="2.200" rx="0.700" fill="#fff" stroke="#333" stroke-width="1"/><path d="M1.600 4.400V11.300Q1.600 12.400 2.700 12.400H8.300Q9.400 12.400 9.400 11.300V4.400" fill="none" stroke="#333" stroke-width="1.100"/><path d="M3.600 5V11.600M5.500 5V11.600M7.400 5V11.600" fill="none" stroke="#333" stroke-width="0.900"/></svg></td></tr>
<tr><td><input type="checkbox" class="ck"></td><td><input type="text" class="it" value="8"></td><td class="n">93</td><td>快三</td><td><u>吉林快3</u></td><td class="n">jlk3</td><td class="n">120</td><td>后台更改描述</td><td>第三方彩</td><td class="n">0</td><td><span class="lb">正常</span></td><td><span class="lb">启用</span></td><td class="op"><svg width="15" height="15" viewBox="0 0 15 15" style="margin-right:13px"><path d="M0.600 14L1.500 10.300L4.300 13.100z" fill="#333"/><path d="M3.300 11.300L10.300 4.300M11.100 3.500L12.700 1.900" fill="none" stroke="#333" stroke-width="3.300"/></svg><svg width="11" height="13" viewBox="0 0 11 13"><path d="M3.300 1.500Q3.300 0.200 5.500 0.200T7.700 1.500z" fill="#333"/><rect x="0.500" y="1.700" width="10" height="2.200" rx="0.700" fill="#fff" stroke="#333" stroke-width="1"/><path d="M1.600 4.400V11.300Q1.600 12.400 2.700 12.400H8.300Q9.400 12.400 9.400 11.300V4.400" fill="none" stroke="#333" stroke-width="1.100"/><path d="M3.600 5V11.600M5.500 5V11.600M7.400 5V11.600" fill="none" stroke="#333" stroke-width="0.900"/></svg></td></tr>
<tr><td><input type="checkbox" class="ck"></td><td><input type="text" class="it" value="9"></td><td class="n">113</td><td>快乐彩</td><td><u>大富快乐8</u></td><td class="n">dfkeno</td><td class="n">10</td><td>2分钟1期</td><td>系统彩</td><td class="n">0</td><td><span class="lb">正常</span></td><td><span class="lb">启用</span></td><td class="op"><svg width="15" height="15" viewBox="0 0 15 15" style="margin-right:13px"><path d="M0.600 14L1.500 10.300L4.300 13.100z" fill="#333"/><path d="M3.300 11.300L10.300 4.300M11.100 3.500L12.700 1.900" fill="none" stroke="#333" stroke-width="3.300"/></svg><svg width="11" height="13" viewBox="0 0 11 13"><path d="M3.300 1.500Q3.300 0.200 5.500 0.200T7.700 1.500z" fill="#333"/><rect x="0.500" y="1.700" width="10" height="2.200" rx="0.700" fill="#fff" stroke="#333" stroke-width="1"/><path d="M1.600 4.400V11.300Q1.600 12.400 2.700 12.400H8.300Q9.400 12.400 9.400 11.300V4.400" fill="none" stroke="#333" stroke-width="1.100"/><path d="M3.600 5V11.600M5.500 5V11.600M7.400 5V11.600" fill="none" stroke="#333" stroke-width="0.900"/></svg></td></tr>
</tbody>
</table>
</main>
<div id="wm">
  <div class="wm-logo"><span class="pm">PM</span><span class="pg">品够源码</span></div>
  <div class="wm-url"><i class="a"></i><span>pmzym.com</span><i class="b"></i></div>
  <div class="wm-diag">认准域名谨防高仿网站</div>
</div>
<div id="sb"><svg width="19" height="829" viewBox="0 0 19 829"><path d="M3 15L9.500 8L16 15z" fill="#8b8b8b"/><rect x="4" y="23" width="11" height="332" rx="5.500" fill="#8b8b8b"/><path d="M3 820L9.500 827L16 820z" fill="#8b8b8b"/></svg></div>
</body>
</html>
